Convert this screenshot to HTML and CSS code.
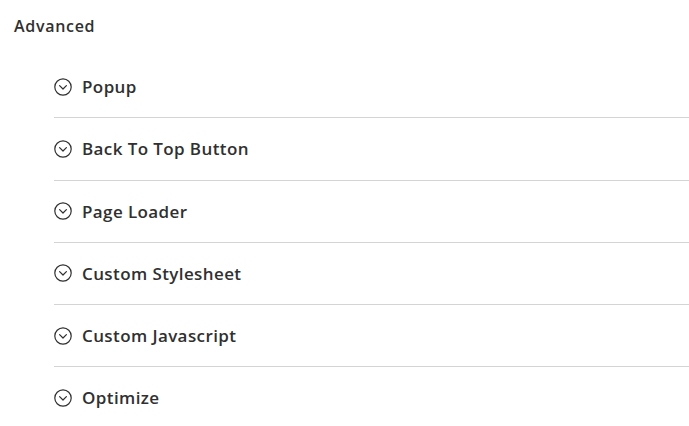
FILE: index.html
```html
<!DOCTYPE html>
<html>
<head>
<meta charset="utf-8">
<link rel="stylesheet" href="styles.css">
</head>
<body>
<div class="page">
  <h2 class="title">Advanced</h2>
  <ul class="sections">
    <li class="section"><svg class="icon" viewBox="0 0 18 18"><circle cx="9" cy="9" r="8.2"/><path d="M5.6 7.6 L9 11 L12.4 7.6"/></svg><span>Popup</span></li>
    <li class="section"><svg class="icon" viewBox="0 0 18 18"><circle cx="9" cy="9" r="8.2"/><path d="M5.6 7.6 L9 11 L12.4 7.6"/></svg><span>Back To Top Button</span></li>
    <li class="section"><svg class="icon" viewBox="0 0 18 18"><circle cx="9" cy="9" r="8.2"/><path d="M5.6 7.6 L9 11 L12.4 7.6"/></svg><span>Page Loader</span></li>
    <li class="section"><svg class="icon" viewBox="0 0 18 18"><circle cx="9" cy="9" r="8.2"/><path d="M5.6 7.6 L9 11 L12.4 7.6"/></svg><span>Custom Stylesheet</span></li>
    <li class="section"><svg class="icon" viewBox="0 0 18 18"><circle cx="9" cy="9" r="8.2"/><path d="M5.6 7.6 L9 11 L12.4 7.6"/></svg><span>Custom Javascript</span></li>
    <li class="section"><svg class="icon" viewBox="0 0 18 18"><circle cx="9" cy="9" r="8.2"/><path d="M5.6 7.6 L9 11 L12.4 7.6"/></svg><span>Optimize</span></li>
  </ul>
</div>
</body>
</html>
```
FILE: styles.css
```css
html, body {
  margin: 0;
  padding: 0;
  background: #ffffff;
}
.page {
  font-family: "Open Sans", "Liberation Sans", sans-serif;
  color: #303030;
}
.title {
  margin: 0;
  padding: 15px 0 0 14px;
  height: 40px;
  box-sizing: border-box;
  font-size: 16px;
  font-weight: 600;
  line-height: 22px;
  letter-spacing: 0.7px;
}
.sections {
  list-style: none;
  margin: 16px 0 0 54px;
  padding: 0;
}
.section {
  display: flex;
  align-items: center;
  gap: 10px;
  height: 61.25px;
  border-bottom: 1px solid #d4d4d4;
  font-size: 17px;
  font-weight: 600;
  letter-spacing: 0.4px;
}
.section:last-child {
  border-bottom: none;
}
.icon {
  width: 18px;
  height: 18px;
  fill: none;
  stroke: #303030;
  stroke-width: 1.2;
  stroke-linecap: round;
  stroke-linejoin: round;
  flex-shrink: 0;
}
```
